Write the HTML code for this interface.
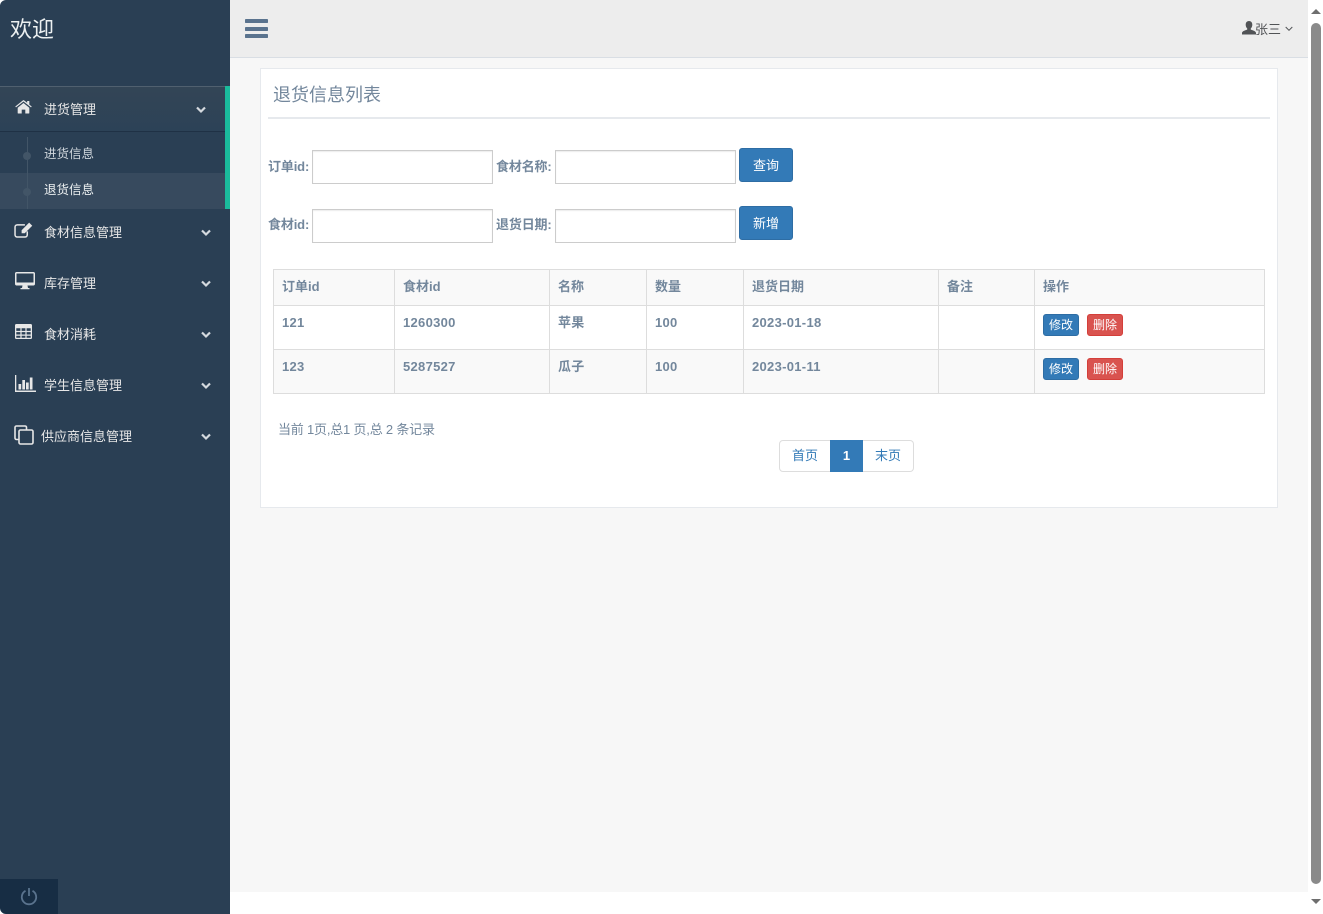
<!DOCTYPE html>
<html lang="zh-CN">
<head>
<meta charset="utf-8">
<title>退货信息列表</title>
<style>
html,body{margin:0;padding:0;width:1323px;height:914px;overflow:hidden;background:#fff;}
body{position:relative;font-family:"Liberation Sans","Noto Sans CJK SC",sans-serif;font-size:13px;color:#73879c;}
.a{position:absolute;white-space:nowrap;}
#side{position:absolute;left:0;top:0;width:230px;height:914px;background:#2a3f54;}
#main{position:absolute;left:230px;top:58px;width:1078px;height:834px;background:#f7f7f7;}
#top{position:absolute;left:230px;top:0;width:1078px;height:57px;background:#ededed;border-bottom:1px solid #d9dee4;}
.menu{color:#e7e7e7;font-size:13px;line-height:20px;}
.sub{color:#cfd6dc;font-size:12.5px;line-height:18px;}
.chev{position:absolute;}
#panel{position:absolute;left:260px;top:68px;width:1016px;height:438px;background:#fff;border:1px solid #e6e9ed;}
.lbl{font-weight:bold;font-size:13px;line-height:18px;color:#73879c;letter-spacing:-.15px;}
.inp{position:absolute;width:179px;height:32px;border:1px solid #ccc;background:#fff;box-shadow:inset 0 1px 1px rgba(0,0,0,.075);}
.btn{position:absolute;width:52px;height:32px;background:#337ab7;border:1px solid #2e6da4;border-radius:3px;color:#fff;font-size:13px;line-height:34px;text-align:center;}
table{position:absolute;left:273px;top:269px;border-collapse:collapse;table-layout:fixed;width:991px;background:#fff;}
td,th{border:1px solid #ddd;padding:8px;vertical-align:top;text-align:left;font-size:13px;line-height:18.5px;font-weight:bold;color:#73879c;}
th{background:#f9f9f9;height:18.5px;padding:8px 8px 8px;}
td{height:27px;letter-spacing:.3px;}
tr.s td{background:#f9f9f9;}
.xs{display:inline-block;height:20px;width:34px;border-radius:3px;color:#fff;font-size:12px;line-height:20px;text-align:center;font-weight:normal;margin-top:0;border:1px solid;letter-spacing:0;}
.bl{background:#337ab7;border-color:#2e6da4;margin-right:8px;}
.rd{background:#d9534f;border-color:#d43f3a;}
#pg{position:absolute;left:779px;top:440px;height:32px;width:135px;}
#pg div{position:absolute;top:0;height:30px;line-height:30px;text-align:center;background:#fff;border:1px solid #ddd;color:#337ab7;font-size:13px;}
</style>
</head>
<body>
<div id="main"></div>
<div id="top"></div>

<div id="side">
  <div class="a" style="left:10px;top:14px;font-size:22px;line-height:32px;color:#ecf0f1;">欢迎</div>

  <div class="a" style="left:0;top:86px;width:225px;height:44px;background:linear-gradient(#334556,#2c4257);border-top:1px solid #50606f;border-bottom:1px solid #1f3145;"></div>
  <div class="a" style="left:225px;top:86px;width:5px;height:123px;background:#1abb9c;"></div>
  <div class="a" style="left:0;top:173px;width:225px;height:36px;background:#374a5e;"></div>
  <div class="a" style="left:27px;top:137px;width:1px;height:72px;background:#425567;"></div>
  <div class="a" style="left:23px;top:152px;width:8px;height:8px;border-radius:50%;background:#425567;"></div>
  <div class="a" style="left:23px;top:188px;width:8px;height:8px;border-radius:50%;background:#425567;"></div>

  <svg class="a" style="left:15px;top:100px" width="17" height="14.500" viewBox="0 0 19 16"><path fill="#e7e7e7" d="M9.500 3.200 3 8.600V14.400c0 .4.300.6.600.6H7.500v-4.400h4V15h3.900c.3 0 .6-.2.6-.6V8.600Z"/><path fill="#e7e7e7" d="M18.700 7.200 16 5V1h-2.400v2L10.300.4a1.200 1.200 0 0 0-1.600 0L.3 7.200l.8 1L9.500 1.600l8.400 6.600Z"/></svg>
  <div class="a menu" style="left:44px;top:100px;">进货管理</div>

  <div class="a sub" style="left:44px;top:145px;">进货信息</div>
  <div class="a sub" style="left:44px;top:181px;color:#ecf0f1;">退货信息</div>

  <svg class="a" style="left:14px;top:222px" width="19" height="16" viewBox="0 0 20 17"><path fill="none" stroke="#e7e7e7" stroke-width="1.600" d="M11.500 3H3.400C2.100 3 1 4 1 5.400v8.200C1 15 2.100 16 3.400 16h8.200c1.300 0 2.400-1 2.400-2.400V10"/><path fill="#e7e7e7" d="M16 .7 19.300 4 11.300 12H8v-3.300Z"/></svg>
  <div class="a menu" style="left:44px;top:223px;">食材信息管理</div>

  <svg class="a" style="left:15px;top:272px" width="20" height="18" viewBox="0 0 20 18"><path fill="#e7e7e7" fill-rule="evenodd" d="M1.500 0h17C19.300 0 20 .7 20 1.500V12c0 .8-.7 1.500-1.500 1.500h-17C.7 13.500 0 12.800 0 12V1.500C0 .7.700 0 1.500 0ZM1.500 1.500V10.500h17V1.500Z"/><path fill="#e7e7e7" d="M7.500 13.500h5l.5 2.500h1.500v1.200h-9V16H7Z"/></svg>
  <div class="a menu" style="left:44px;top:274px;">库存管理</div>

  <svg class="a" style="left:15px;top:324px" width="17" height="15" viewBox="0 0 17 15"><path fill="#e7e7e7" fill-rule="evenodd" d="M1.300 0h14.400C16.400 0 17 .6 17 1.300v12.400c0 .7-.6 1.300-1.300 1.300H1.300C.6 15 0 14.400 0 13.700V1.300C0 .6.600 0 1.300 0ZM1.300 4.300v2.600h4.100V4.300Zm5.300 0v2.600h3.800V4.300Zm5 0v2.600h4.100V4.300ZM1.300 8.100v2.400h4.100V8.100Zm5.300 0v2.400h3.800V8.100Zm5 0v2.400h4.100V8.100ZM1.300 11.700v2h4.100v-2Zm5.300 0v2h3.800v-2Zm5 0v2h4.100v-2Z"/></svg>
  <div class="a menu" style="left:44px;top:325px;">食材消耗</div>

  <svg class="a" style="left:15px;top:375px" width="21" height="17" viewBox="0 0 21 17"><path fill="#e7e7e7" d="M0 0h1.300v15.500H21V17H0Z"/><rect fill="#e7e7e7" x="3.500" y="9" width="2.700" height="5.500"/><rect fill="#e7e7e7" x="7.300" y="5" width="2.700" height="9.500"/><rect fill="#e7e7e7" x="11" y="7.500" width="2.700" height="7"/><rect fill="#e7e7e7" x="14.800" y="2.500" width="2.700" height="12"/></svg>
  <div class="a menu" style="left:44px;top:376px;">学生信息管理</div>

  <svg class="a" style="left:14px;top:425px" width="20" height="20" viewBox="0 0 20 20"><path fill="none" stroke="#e7e7e7" stroke-width="1.600" d="M4.500 14.500H2.500C1.600 14.500 1 13.900 1 13V2.500C1 1.600 1.600 1 2.500 1H11c.9 0 1.500.6 1.500 1.500V4.500"/><rect fill="none" stroke="#e7e7e7" stroke-width="1.600" x="5" y="5" width="14" height="14" rx="1.500"/></svg>
  <div class="a menu" style="left:41px;top:427px;">供应商信息管理</div>

  <svg class="chev" style="left:196px;top:106px" width="10" height="8" viewBox="0 0 10 8"><path fill="none" stroke="#d5dadf" stroke-width="2.200" d="M1 1.500 5 5.500 9 1.500"/></svg>
  <svg class="chev" style="left:201px;top:229px" width="10" height="8" viewBox="0 0 10 8"><path fill="none" stroke="#d5dadf" stroke-width="2.200" d="M1 1.500 5 5.500 9 1.500"/></svg>
  <svg class="chev" style="left:201px;top:280px" width="10" height="8" viewBox="0 0 10 8"><path fill="none" stroke="#d5dadf" stroke-width="2.200" d="M1 1.500 5 5.500 9 1.500"/></svg>
  <svg class="chev" style="left:201px;top:331px" width="10" height="8" viewBox="0 0 10 8"><path fill="none" stroke="#d5dadf" stroke-width="2.200" d="M1 1.500 5 5.500 9 1.500"/></svg>
  <svg class="chev" style="left:201px;top:382px" width="10" height="8" viewBox="0 0 10 8"><path fill="none" stroke="#d5dadf" stroke-width="2.200" d="M1 1.500 5 5.500 9 1.500"/></svg>
  <svg class="chev" style="left:201px;top:433px" width="10" height="8" viewBox="0 0 10 8"><path fill="none" stroke="#d5dadf" stroke-width="2.200" d="M1 1.500 5 5.500 9 1.500"/></svg>

  <div class="a" style="left:0;top:879px;width:58px;height:35px;background:#172d44;"></div>
  <svg class="a" style="left:20px;top:888px" width="18" height="18" viewBox="0 0 18 18"><path fill="none" stroke="#5a738e" stroke-width="1.800" d="M5.500 2.800a7.200 7.200 0 1 0 7 0"/><path fill="none" stroke="#5a738e" stroke-width="1.800" d="M9 0v8"/></svg>
</div>

<!-- top nav -->
<svg class="a" style="left:245px;top:19px" width="23" height="19" viewBox="0 0 23 19"><g fill="#5a738e"><rect x="0" y="0" width="23" height="4" rx=".8"/><rect x="0" y="8" width="23" height="4" rx=".8"/><rect x="0" y="15" width="23" height="4" rx=".8"/></g></svg>
<svg class="a" style="left:1242px;top:21px" width="14" height="14" viewBox="0 0 14 14"><path fill="#515356" d="M7 0c2 0 3.300 1.500 3.300 3.700 0 1.500-.6 2.900-1.500 3.700v1.200c1.800.7 4.700 1.400 5.200 3.100V13.500H0V11.700c.5-1.700 3.400-2.400 5.200-3.100V7.400C4.300 6.600 3.700 5.200 3.700 3.700 3.700 1.500 5 0 7 0Z"/></svg>
<div class="a" style="left:1255px;top:21px;font-size:13px;line-height:18px;color:#515356;">张三</div>
<svg class="a" style="left:1285px;top:26px" width="8" height="6" viewBox="0 0 8 6"><path fill="none" stroke="#515356" stroke-width="1" d="M.7 1 4 4.300 7.300 1"/></svg>

<!-- panel -->
<div id="panel"></div>
<div class="a" style="left:273px;top:82px;font-size:18px;line-height:26px;color:#73879c;">退货信息列表</div>
<div class="a" style="left:268px;top:117px;width:1002px;height:2px;background:#e6e9ed;"></div>

<div class="a lbl" style="left:268px;top:158px;">订单id:</div>
<div class="inp" style="left:312px;top:150px;"></div>
<div class="a lbl" style="left:496px;top:158px;">食材名称:</div>
<div class="inp" style="left:555px;top:150px;"></div>
<div class="btn" style="left:739px;top:148px;">查询</div>

<div class="a lbl" style="left:268px;top:216px;">食材id:</div>
<div class="inp" style="left:312px;top:209px;"></div>
<div class="a lbl" style="left:496px;top:216px;">退货日期:</div>
<div class="inp" style="left:555px;top:209px;"></div>
<div class="btn" style="left:739px;top:206px;">新增</div>

<table>
  <colgroup><col style="width:121px"><col style="width:155px"><col style="width:97px"><col style="width:97px"><col style="width:195px"><col style="width:96px"><col style="width:230px"></colgroup>
  <tr><th>订单id</th><th>食材id</th><th>名称</th><th>数量</th><th>退货日期</th><th>备注</th><th>操作</th></tr>
  <tr><td>121</td><td>1260300</td><td>苹果</td><td>100</td><td>2023-01-18</td><td></td><td><span class="xs bl">修改</span><span class="xs rd">删除</span></td></tr>
  <tr class="s"><td>123</td><td>5287527</td><td>瓜子</td><td>100</td><td>2023-01-11</td><td></td><td><span class="xs bl">修改</span><span class="xs rd">删除</span></td></tr>
</table>

<div class="a" style="left:278px;top:421px;font-size:13px;line-height:18px;color:#73879c;letter-spacing:-.2px;">当前 1页,总1 页,总 2 条记录</div>

<div id="pg">
  <div style="left:0;width:50px;border-radius:4px 0 0 4px;">首页</div>
  <div style="left:51px;width:31px;background:#337ab7;border-color:#337ab7;color:#fff;font-weight:bold;">1</div>
  <div style="left:84px;width:50px;border-left:0;border-radius:0 4px 4px 0;">末页</div>
</div>

<!-- scrollbar -->
<div class="a" style="left:1308px;top:0;width:15px;height:914px;background:#fff;"></div>
<div class="a" style="left:1311px;top:23px;width:10px;height:861px;background:#8a8a8a;border-radius:5px;"></div>
<div class="a" style="left:1311px;top:9px;width:0;height:0;border-left:5px solid transparent;border-right:5px solid transparent;border-bottom:5px solid #6e6e6e;"></div>
<div class="a" style="left:1311px;top:899px;width:0;height:0;border-left:5px solid transparent;border-right:5px solid transparent;border-top:5px solid #6e6e6e;"></div>

<!-- window corners -->
<svg class="a" style="left:0;top:0" width="6" height="6" viewBox="0 0 6 6"><path fill="#fff" d="M0 0h6A6 6 0 0 0 0 6Z"/></svg>
<svg class="a" style="left:0;top:908px" width="6" height="6" viewBox="0 0 6 6"><path fill="#fff" d="M0 6V0A6 6 0 0 0 6 6Z"/></svg>
</body>
</html>
